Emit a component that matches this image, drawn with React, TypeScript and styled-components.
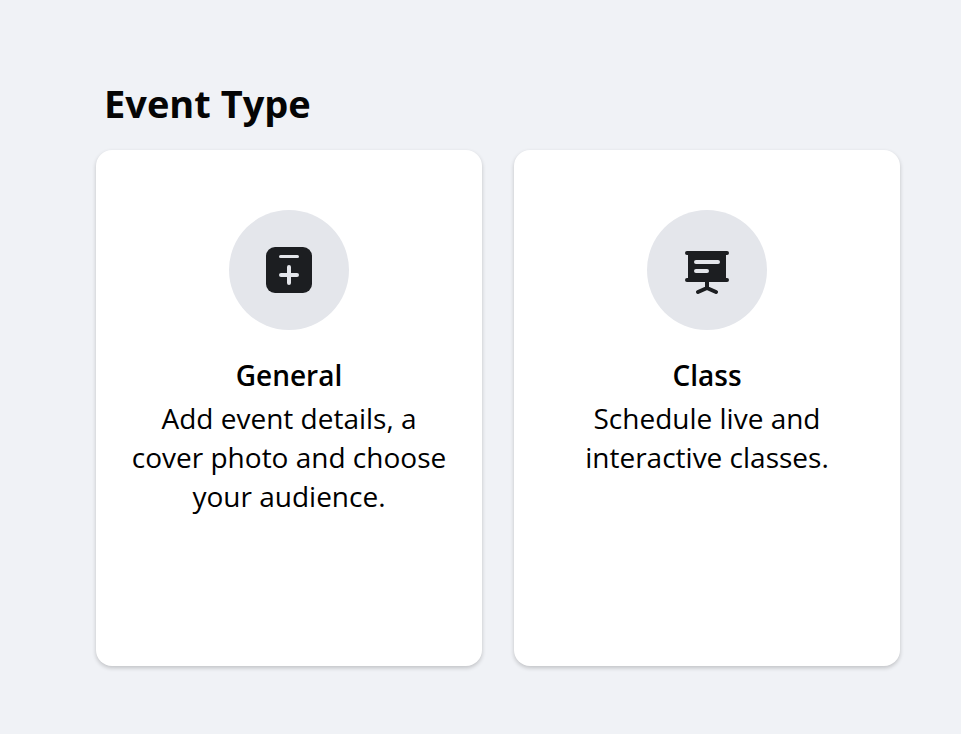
import React from "react";
import styled, { createGlobalStyle } from "styled-components";

const GlobalStyle = createGlobalStyle`
  * { box-sizing: border-box; }
  body {
    margin: 0;
    background: #f0f2f6;
    color: #050505;
    font-family: "Segoe UI", "Open Sans", "Noto Sans", sans-serif;
  }
`;

const Page = styled.main`
  padding: 77px 61px 68px 96px;
`;

const Heading = styled.h1`
  margin: 0 0 21px;
  padding-left: 8px;
  font-size: 38px;
  line-height: 52px;
  font-weight: 700;
`;

const Cards = styled.div`
  display: grid;
  grid-template-columns: 1fr 1fr;
  gap: 32px;
`;

const Card = styled.button`
  display: flex;
  flex-direction: column;
  align-items: center;
  min-height: 516px;
  padding: 60px 30px;
  border: 0;
  border-radius: 16px;
  background: #fff;
  box-shadow: 0 2px 4px rgba(0, 0, 0, 0.2);
  color: #000;
  font: inherit;
  text-align: center;
  cursor: pointer;
`;

const IconCircle = styled.span`
  display: grid;
  place-items: center;
  width: 120px;
  height: 120px;
  margin-bottom: 25px;
  border-radius: 50%;
  background: #e4e6eb;
`;

const CardTitle = styled.span`
  font-size: 28px;
  line-height: 40px;
  font-weight: 600;
`;

const CardText = styled.span`
  margin-top: 4px;
  font-size: 28px;
  line-height: 39px;
  font-weight: 400;
`;

const CalendarPlusIcon = () => (
  <svg width="60" height="60" viewBox="0 0 60 60" aria-hidden="true">
    <rect x="7" y="7" width="46" height="46" rx="9" fill="#1c1e21" />
    <path d="M21.5 16.5h17" stroke="#e4e6eb" strokeWidth="3" strokeLinecap="round" />
    <path d="M22 35h16M30 27v16" stroke="#e4e6eb" strokeWidth="4" strokeLinecap="round" />
  </svg>
);

const BoardIcon = () => (
  <svg width="60" height="60" viewBox="0 0 60 60" aria-hidden="true">
    <path d="M11 13h38v27H11z" fill="#1c1e21" />
    <path d="M10 13h40M10 40h40M30 40v8M21 52l9-4 9 4" fill="none" stroke="#1c1e21" strokeWidth="4" strokeLinecap="round" strokeLinejoin="round" />
    <path d="M19 22h22M19 31h11" stroke="#e4e6eb" strokeWidth="4" strokeLinecap="round" />
  </svg>
);

const eventTypes = [
  { title: "General", text: "Add event details, a cover photo and choose your audience.", Icon: CalendarPlusIcon },
  { title: "Class", text: "Schedule live and interactive classes.", Icon: BoardIcon },
];

export default function App() {
  return (
    <Page>
      <GlobalStyle />
      <Heading>Event Type</Heading>
      <Cards>
        {eventTypes.map(({ title, text, Icon }) => (
          <Card key={title} type="button">
            <IconCircle><Icon /></IconCircle>
            <CardTitle>{title}</CardTitle>
            <CardText>{text}</CardText>
          </Card>
        ))}
      </Cards>
    </Page>
  );
}
